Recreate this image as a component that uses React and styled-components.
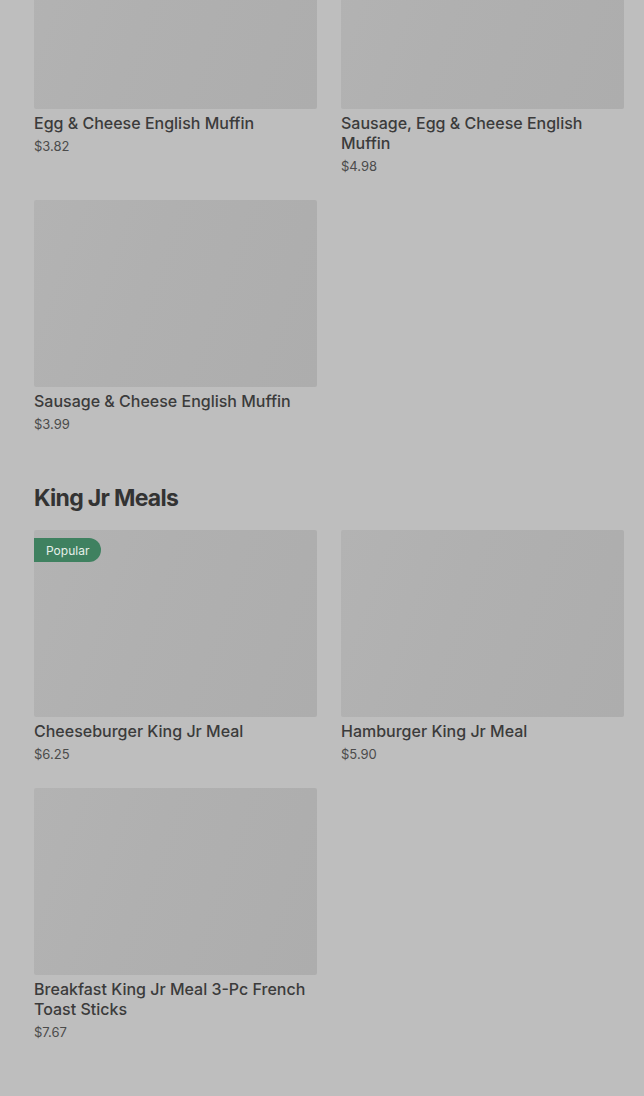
import React from "react";
import styled, { createGlobalStyle } from "styled-components";

const Global = createGlobalStyle`
  html, body { margin: 0; padding: 0; background: #bebebe; }
  body { font-family: Inter, "Liberation Sans", sans-serif; overflow: hidden; }
`;

const Page = styled.main`
  display: flex;
  flex-direction: column;
  padding: 0 20px 40px 34px;
  margin-top: -78px;
`;

const Grid = styled.div`
  display: grid;
  grid-template-columns: 283px 283px;
  column-gap: 24px;
  row-gap: 25px;
`;

const Card = styled.div`
  display: flex;
  flex-direction: column;
  position: relative;
`;

const Thumb = styled.div`
  height: 187px;
  border-radius: 2px;
  background: linear-gradient(110deg, #b3b3b3 0%, #b0b0b0 40%, #adadad 100%);
`;

const Badge = styled.span`
  position: absolute;
  top: 8px;
  left: 0;
  height: 24px;
  padding: 0 12px;
  display: flex;
  align-items: center;
  background: #3f8160;
  color: #e6efe9;
  font-size: 12px;
  border-radius: 0 12px 12px 0;
`;

const Title = styled.div`
  margin-top: 4px;
  font-size: 16px;
  line-height: 20px;
  font-weight: 500;
  color: #3b3b3b;
`;

const Price = styled.div`
  margin-top: 4px;
  font-size: 13px;
  line-height: 18px;
  color: #4b4b4b;
`;

const Heading = styled.h2`
  margin: 49px 0 16px;
  font-size: 23px;
  line-height: 32px;
  font-weight: 700;
  letter-spacing: -0.7px;
  color: #333;
`;

const Item = ({ title, price, badge }) => (
  <Card>
    <Thumb />
    {badge && <Badge>{badge}</Badge>}
    <Title>{title}</Title>
    <Price>{price}</Price>
  </Card>
);

export default function App() {
  return (
    <>
      <Global />
      <Page>
        <Grid>
          <Item title="Egg & Cheese English Muffin" price="$3.82" />
          <Item title="Sausage, Egg & Cheese English Muffin" price="$4.98" />
          <Item title="Sausage & Cheese English Muffin" price="$3.99" />
        </Grid>
        <Heading>King Jr Meals</Heading>
        <Grid>
          <Item title="Cheeseburger King Jr Meal" price="$6.25" badge="Popular" />
          <Item title="Hamburger King Jr Meal" price="$5.90" />
          <Item title="Breakfast King Jr Meal 3-Pc French Toast Sticks" price="$7.67" />
        </Grid>
      </Page>
    </>
  );
}
